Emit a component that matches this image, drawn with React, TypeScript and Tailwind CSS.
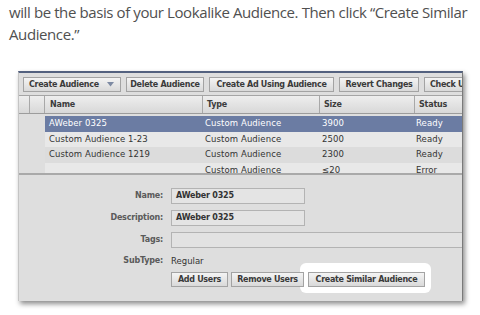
import React from 'react';

const ui = { fontFamily: '"DejaVu Sans", "Liberation Sans", sans-serif' };

function ToolButton({ children, className = '' }: { children: React.ReactNode; className?: string }) {
  return (
    <div
      className={`flex h-[15px] shrink-0 items-center overflow-hidden whitespace-nowrap border border-[#a3a3a3] bg-gradient-to-b from-[#f4f4f4] to-[#d9d9d9] text-[8px] font-bold tracking-[-0.3px] text-[#3a3a3a] ${className}`}
    >
      {children}
    </div>
  );
}

const rows = [
  { name: 'AWeber 0325', type: 'Custom Audience', size: '3900', status: 'Ready' },
  { name: 'Custom Audience 1-23', type: 'Custom Audience', size: '2500', status: 'Ready' },
  { name: 'Custom Audience 1219', type: 'Custom Audience', size: '2300', status: 'Ready' },
  { name: '', type: 'Custom Audience', size: '\u226420', status: 'Error' },
];

function FieldRow({ label, children }: { label: string; children: React.ReactNode }) {
  return (
    <div className="flex h-[16px] items-center">
      <div className="w-[144px] shrink-0 text-right text-[8px] font-bold tracking-[-0.2px] text-[#5a5a5a]">
        {label}
      </div>
      <div className="ml-[8px] flex h-full flex-1 items-center">{children}</div>
    </div>
  );
}

export default function App() {
  return (
    <div className="relative h-[315px] w-[480px] overflow-hidden bg-white">
      <p
        className="pl-[9px] pt-[1px] text-[15px] leading-[22px] tracking-[-0.4px] text-[#505050]"
        style={{ fontFamily: '"Open Sans", "Noto Sans", sans-serif' }}
      >
        will be the basis of your Lookalike Audience. Then click “Create Similar
        <br />
        Audience.”
      </p>

      <div
        className="ml-[18px] mt-[26px] w-[445px] border-r border-l border-t-2 border-r-[#7a7a7a] border-l-[#c4c4c4] border-t-[#53617f] bg-[#dedede] shadow-[2px_3px_5px_rgba(0,0,0,0.45)]"
        style={ui}
      >
        {/* toolbar */}
        <div className="flex h-[23px] gap-[5px] overflow-hidden border-b border-[#a5a5a5] pl-[4px] pt-[4px]">
          <ToolButton className="w-[98px] justify-between pl-[5px] pr-[6px]">
            <span>Create Audience</span>
            <svg width="7" height="5" viewBox="0 0 7 5">
              <path d="M0 0h7L3.5 4.5z" fill="#7d8aa3" />
            </svg>
          </ToolButton>
          <ToolButton className="w-[78px] justify-center">Delete Audience</ToolButton>
          <ToolButton className="w-[125px] justify-center">Create Ad Using Audience</ToolButton>
          <ToolButton className="w-[80px] justify-center">Revert Changes</ToolButton>
          <ToolButton className="w-[60px] pl-[5px]">Check Users</ToolButton>
        </div>

        {/* header */}
        <div className="flex h-[18px] border-b border-[#9c9c9c] bg-gradient-to-b from-[#eeeeee] to-[#d8d8d8] text-[8px] font-bold tracking-[-0.2px] text-[#3c3c3c]">
          <div className="w-[11px] border-r border-[#a8a8a8]" />
          <div className="w-[15px] border-r border-[#a8a8a8]" />
          <div className="flex w-[158px] items-center border-r border-[#a8a8a8] pl-[5px]">Name</div>
          <div className="flex w-[117px] items-center border-r border-[#a8a8a8] pl-[4px]">Type</div>
          <div className="flex w-[95px] items-center border-r border-[#a8a8a8] pl-[4px]">Size</div>
          <div className="flex flex-1 items-center pl-[4px]">Status</div>
        </div>

        {/* rows */}
        <div className="mt-[2px] h-[59px] overflow-hidden border-b-2 border-[#a9a9a9] text-[8.5px] tracking-[0.1px]">
          {rows.map((r, i) => {
            const selected = i === 0;
            return (
              <div
                key={i}
                className={`flex h-[15.5px] items-center ${i === 2 ? 'bg-[#dcdcdc]' : 'bg-[#e8e8e8]'}`}
              >
                <div className="w-[26px] shrink-0 self-stretch bg-[#dedede]" />
                <div
                  className={`flex h-full flex-1 items-center ${
                    selected ? 'bg-[#6b7ca3] text-white' : 'text-[#333]'
                  }`}
                >
                  <div className="w-[158px] pl-[4px]">{r.name}</div>
                  <div className="w-[117px] pl-[2px]">{r.type}</div>
                  <div className="w-[95px] pl-[2px]">{r.size}</div>
                  <div className="flex-1 pl-[1px]">{r.status}</div>
                </div>
              </div>
            );
          })}
        </div>

        {/* form */}
        <div className="flex flex-col gap-[6px] pt-[13px] pb-[14px]">
          <FieldRow label="Name:">
            <div className="flex h-full w-[134px] items-center border border-[#b3b3b3] bg-[#e4e4e4] pl-[4px] text-[8px] font-bold tracking-[-0.2px] text-[#333]">
              AWeber 0325
            </div>
          </FieldRow>
          <FieldRow label="Description:">
            <div className="flex h-full w-[134px] items-center border border-[#b3b3b3] bg-[#e4e4e4] pl-[4px] text-[8px] font-bold tracking-[-0.2px] text-[#333]">
              AWeber 0325
            </div>
          </FieldRow>
          <FieldRow label="Tags:">
            <div className="h-full flex-1 border-y border-l border-[#b3b3b3] bg-[#e2e2e2]" />
          </FieldRow>
          <div className="flex h-[14px] items-center">
            <div className="w-[144px] shrink-0 text-right text-[8px] font-bold tracking-[-0.2px] text-[#5a5a5a]">SubType:</div>
            <div className="ml-[8px] text-[8.5px] text-[#333]">Regular</div>
          </div>
          <div className="-mt-[2px] flex h-[15px] items-start pl-[152px]">
            <ToolButton className="relative z-10 w-[57px] justify-center">Add Users</ToolButton>
            <ToolButton className="relative z-10 ml-[3px] w-[73px] justify-center">Remove Users</ToolButton>
            <div className="-mb-[6px] -ml-[4px] -mt-[9px] rounded-[6px] bg-white pb-[6px] pl-[8px] pr-[6px] pt-[9px]">
              <ToolButton className="w-[117px] justify-center">Create Similar Audience</ToolButton>
            </div>
          </div>
        </div>
      </div>
    </div>
  );
}
